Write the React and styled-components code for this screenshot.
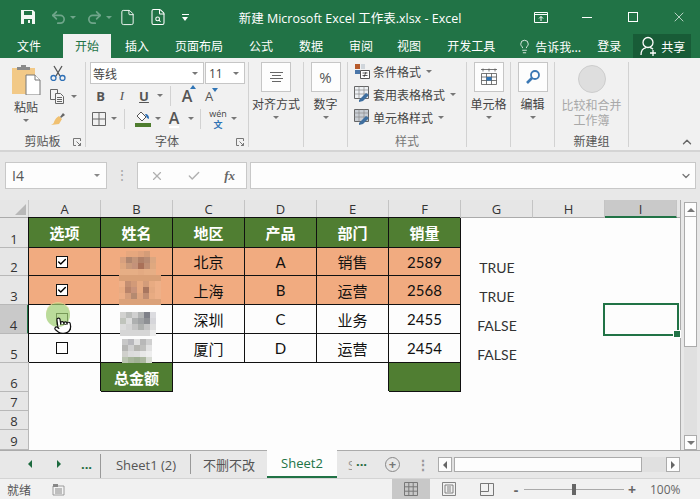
import styled, { createGlobalStyle } from "styled-components";
import { Check, ChevronDown, ChevronUp, File, FileSearch, Lightbulb, Pointer, Redo2, Undo2, X } from "lucide-react";

const CJK = `"Noto Sans CJK SC", sans-serif`;
const UI = `"Open Sans", "Noto Sans CJK SC", sans-serif`;
const SHEET = `Lato, "Noto Sans CJK SC", sans-serif`;
const GREEN = "#217346";

const tabs = ["开始", "插入", "页面布局", "公式", "数据", "审阅", "视图", "开发工具"];
const columns = ["A", "B", "C", "D", "E", "F", "G", "H", "I"];

const rows = [
	{ n: 1, cells: ["选项", "姓名", "地区", "产品", "部门", "销量"], kind: "head" },
	{ n: 2, check: true, cells: ["", "", "北京", "A", "销售", "2589"], kind: "hot", result: "TRUE" },
	{ n: 3, check: true, cells: ["", "", "上海", "B", "运营", "2568"], kind: "hot", result: "TRUE" },
	{ n: 4, check: false, cells: ["", "", "深圳", "C", "业务", "2455"], kind: "plain", result: "FALSE" },
	{ n: 5, check: false, cells: ["", "", "厦门", "D", "运营", "2454"], kind: "plain", result: "FALSE" },
];

const blurs = {
	2: {
		left: 19, top: 3, cols: 6,
		tiles: [
			"#f1ab80", "#e6a77e", "#e6a77e", "#dfa27c", "#d49c78", "#f1ab80",
			"#d7a07e", "#b0866f", "#c39478", "#b08068", "#b78a72", "#dba680",
			"#dfa77f", "#c9997a", "#c4927a", "#a97058", "#c08f74", "#dfa87f",
			"#e6ae85", "#e6ae85", "#e6ae85", "#e3aa82", "#e6ae85", "#e6ae85",
		],
	},
	3: {
		left: 18, top: -1, cols: 7,
		tiles: [
			"#d9a077", "#d9a077", "#d9a077", "#d9a077", "#d9a077", "#d9a077", "#d9a077",
			"#eeb088", "#c48f72", "#d29a78", "#e6a980", "#d39c7a", "#e8ab82", "#eeb088",
			"#e8ab82", "#b9846a", "#c8937a", "#e6a980", "#a8765f", "#e4a880", "#eeb088",
			"#ecae86", "#d59e7c", "#b58a70", "#dea47e", "#c08d72", "#e8ab82", "#eeb088",
			"#dba27a", "#dba27a", "#dba27a", "#dba27a", "#dba27a", "#dba27a", "#dba27a",
		],
	},
	4: {
		left: 19, top: 7, cols: 6,
		tiles: [
			"#d2d2d0", "#bcbebc", "#d0d0d0", "#b2b4b4", "#7e8088", "#dcdce0",
			"#c0c4bc", "#dcdcdc", "#aeb0b0", "#a0a2a4", "#8e9094", "#d6d6da",
			"#dcdcdc", "#d4d4d4", "#c4c4c4", "#aeb0ae", "#c4c4c4", "#dedede",
			"#d6d6d6", "#d6d6d6", "#d6d6d6", "#d6d6d6", "#d6d6d6", "#ececec",
		],
	},
	5: {
		left: 21, top: 5, cols: 5,
		tiles: [
			"#c8c8c8", "#b8b8bc", "#e0e0e0", "#b8b8b8", "#d0d0d0",
			"#b6b6b4", "#d0d0d0", "#b6b6b2", "#c0c0be", "#e2e2e2",
			"#d0d0cc", "#dcdcdc", "#dedede", "#e8e8e8", "#eeeeee",
			"#bac4b0", "#a8b69c", "#a0b094", "#acb8a0", "#d8dcd4",
		],
	},
};

const Caret = styled.i`
	display: inline-block;
	flex: none;
	width: 0;
	height: 0;
	margin-left: ${(p) => p.$ml ?? 0}px;
	border-left: 3px solid transparent;
	border-right: 3px solid transparent;
	border-top: 3px solid ${(p) => p.$color ?? "#777"};
`;

const SaveIcon = () => (
	<svg width="16" height="16" viewBox="0 0 16 16">
		<path d="M1 1h12l2 2v12H1z" fill="#f2f7f4" />
		<path d="M4 2h8v4H4zM4 10h8v5H4z" fill={GREEN} />
		<path d="M8 11h2v3H8z" fill="#f2f7f4" />
	</svg>
);

const RibbonDisplayIcon = () => (
	<svg width="14" height="11" viewBox="0 0 14 11" fill="none" stroke="#fff">
		<path d="M.5.5h13v10H.5zM.5 2.5h13M7 9V4.5M5 6.5l2-2 2 2" />
	</svg>
);

const ShareIcon = () => (
	<svg width="18" height="20" viewBox="0 0 18 20" fill="none" stroke="#fff" strokeWidth="1.3">
		<circle cx="8" cy="6.500" r="5" />
		<path d="M1 19c0-4.500 2.500-6.800 5.200-7.300M10 11.700c1.200.2 2.200.8 3 1.600M13 14v6M10 17h6" />
	</svg>
);

const PasteIcon = () => (
	<svg width="30" height="30" viewBox="0 0 30 30">
		<rect x="1" y="3" width="23" height="26" fill="#f2c987" />
		<path d="M6 5V2h4V0h5v2h4v3z" fill="#8a8a8a" />
		<path d="M15 10h9l5 5v15H15z" fill="#fff" stroke="#777" />
		<path d="M24 10v5h5" fill="#fff" stroke="#777" />
	</svg>
);

const ScissorsIcon = () => (
	<svg width="16" height="16" viewBox="0 0 16 16" fill="none">
		<path d="M4 1l6 10M12 1L6 11" stroke="#555" strokeWidth="1.300" />
		<circle cx="3.500" cy="13" r="2.500" stroke="#2d6fb5" strokeWidth="1.300" />
		<circle cx="12.500" cy="13" r="2.500" stroke="#2d6fb5" strokeWidth="1.300" />
	</svg>
);

const CopyIcon = () => (
	<svg width="15" height="15" viewBox="0 0 15 15" fill="#f4f4f4" stroke="#666">
		<path d="M.5.5h7v10h-7z" />
		<path d="M5.500 4.500h5l3 3v7h-8z" />
		<path d="M7 8.500h5M7 10.500h5M7 12.500h5" />
	</svg>
);

const BrushIcon = () => (
	<svg width="16" height="15" viewBox="0 0 16 15">
		<path d="M10 5l3-4 2 2-4 3z" fill="#666" />
		<path d="M9 4l3 3-3 5-8 1c2-1 3-2 3-3 1-3 3-5 5-6z" fill="#f0c070" />
	</svg>
);

const BordersIcon = () => (
	<svg width="14" height="14" viewBox="0 0 14 14" fill="none" stroke="#666">
		<path d="M.5.5h13v13H.5zM7 .5v13M.5 7h13" />
	</svg>
);

const FillIcon = () => (
	<svg width="17" height="16" viewBox="0 0 17 16">
		<path d="M7 1l5 5-4 4-5-5z" fill="#fff" stroke="#555" />
		<path d="M11 3c3 0 4 2 4 5l-2-1z" fill="#2d6fb5" />
		<path d="M1 12h16v4H1z" fill="#4e7c2e" />
	</svg>
);

const StyleIcon = ({ variant }) => (
	<svg width="16" height="16" viewBox="0 0 16 16">
		{variant === "cond" ? (
			<>
				<path d="M1 1h5v5H1z" fill="#b75b2c" />
				<path d="M1 7h5v4H1z" fill="#4a76a8" />
				<path d="M7 1h4v5H7z" fill="#cfd5db" />
				<path d="M6.500 7.500h9v8h-9z" fill="#fff" stroke="#555" />
				<path d="M8.500 10h5M8.500 12.500h5M12 9l-2 5" stroke="#333" strokeWidth=".8" />
			</>
		) : (
			<>
				<path d="M.5.500h14v12H.5z" fill={variant === "table" ? "#eef1f4" : "#c9ced4"} stroke="#666" />
				<path d="M.5 4h14M5 .5v12M10 .5v12M.5 8h14" stroke="#8a8a8a" strokeWidth=".7" />
				<path d="M5 14l7-7 3 2-6 6-4 1z" fill="#3f6f9f" />
			</>
		)}
	</svg>
);

const TableIcon = () => (
	<svg width="18" height="18" viewBox="0 0 18 18" fill="none" stroke="#555">
		<path d="M1.500 5.500h15v11h-15zM1.500 9h15M1.500 12.500h15M6.500 5.500v11M11.500 5.500v11" strokeWidth=".8" />
		<path d="M6.500 9h5v3.500h-5z" fill="#2f74b5" stroke="none" />
		<path d="M1 1.500h16M3 .5v3M9 .5v3M15 .5v3" strokeWidth=".8" />
	</svg>
);

const SearchIcon = () => (
	<svg width="16" height="16" viewBox="0 0 16 16" fill="none">
		<circle cx="10" cy="6" r="4" stroke="#3b78b4" strokeWidth="1.800" />
		<path d="M7 9l-5 5" stroke="#3b78b4" strokeWidth="2.600" />
	</svg>
);

const Launcher = () => (
	<svg width="8" height="8" viewBox="0 0 8 8" fill="none" stroke="#777">
		<path d="M7.500 3V.5H.5v7H3M3.500 3.500l4 4M7.500 5v2.500H5" />
	</svg>
);

const GridViewIcon = () => (
	<svg width="14" height="14" viewBox="0 0 14 14" fill="none" stroke="#777">
		<path d="M.5.500h13v13H.5zM4.800.5v13M9.200.5v13M.5 4.800h13M.5 9.200h13" />
	</svg>
);

const PageViewIcon = () => (
	<svg width="14" height="14" viewBox="0 0 14 14" fill="none" stroke="#777">
		<path d="M.5.500h13v13H.5zM3 3h8v8H3zM5 5h4M5 7h4M5 9h4" strokeWidth=".9" />
	</svg>
);

const BreakViewIcon = () => (
	<svg width="14" height="13" viewBox="0 0 14 13" fill="none" stroke="#777">
		<path d="M.5.500h13v12H.5zM.5 8.500h8v-8" />
	</svg>
);

const MacroIcon = () => (
	<svg width="13" height="13" viewBox="0 0 13 13">
		<path d="M1 3h11v9H1z" fill="#f4f4f4" stroke="#888" strokeWidth=".8" />
		<path d="M1 1h5v3H1z" fill="#888" />
		<path d="M3 6h7M3 8h7M3 10h7" stroke="#888" />
	</svg>
);

const App = () => (
	<Page>
		<GlobalStyle />
		<TitleBar>
			<QuickAccess>
				<QatSlot $ml={20}><SaveIcon /></QatSlot>
				<QatSlot $ml={14}><Undo2 size={17} color="#6fa58a" strokeWidth={2.4} /></QatSlot>
				<QatSlot $ml={3}><Caret $color="#6fa58a" /></QatSlot>
				<QatSlot $ml={10}><Redo2 size={17} color="#6fa58a" strokeWidth={2.4} /></QatSlot>
				<QatSlot $ml={3}><Caret $color="#6fa58a" /></QatSlot>
				<QatSlot $ml={7}><File size={17} color="#fff" strokeWidth={1.3} /></QatSlot>
				<QatSlot $ml={13}><FileSearch size={18} color="#fff" strokeWidth={1.4} /></QatSlot>
				<QatSlot $ml={15}><Customize /></QatSlot>
			</QuickAccess>
			<Title>新建 Microsoft Excel 工作表.xlsx - Excel</Title>
			<WindowControls>
				<WindowButton><RibbonDisplayIcon /></WindowButton>
				<WindowButton><MinLine /></WindowButton>
				<WindowButton><MaxBox /></WindowButton>
				<WindowButton><X size={16} color="#fff" strokeWidth={1} /></WindowButton>
			</WindowControls>
		</TitleBar>

		<TabRow>
			<MenuTab $file>文件</MenuTab>
			{tabs.map((t) => (
				<MenuTab key={t} $active={t === "开始"} $tight={t === "视图"}>
					{t}
				</MenuTab>
			))}
			<TellMe>
				<Lightbulb size={15} color="#fff" strokeWidth={1.3} />
				告诉我...
			</TellMe>
			<Login>登录</Login>
			<Share>
				<ShareIcon />
				共享
			</Share>
		</TabRow>

		<Ribbon>
			<Group $w={86}>
				<GroupBody>
					<BigColumn $paste>
						<PasteIcon />
						<BigLabel>粘贴</BigLabel>
						<Caret />
					</BigColumn>
					<SmallColumn>
						<ScissorsIcon />
						<SmallRow><CopyIcon /><Caret $ml={6} /></SmallRow>
						<BrushIcon />
					</SmallColumn>
				</GroupBody>
				<GroupLabel>剪贴板<LauncherSlot><Launcher /></LauncherSlot></GroupLabel>
			</Group>

			<Group $w={163}>
				<FontBody>
					<InputRow>
						<FontInput>等线<Caret /></FontInput>
						<SizeInput>11<Caret /></SizeInput>
					</InputRow>
					<ToolRow>
						<Tool $w={21}><b>B</b></Tool>
						<Tool $w={22} $serif><i>I</i></Tool>
						<Tool $w={22}><Underlined>U</Underlined></Tool>
						<Tool $w={10}><Caret /></Tool>
						<ToolDivider />
						<Tool $w={22} $big>A<UpMark /></Tool>
						<Tool $w={22}>A<DownMark /></Tool>
					</ToolRow>
					<ToolRow>
						<Tool $w={18}><BordersIcon /></Tool>
						<Tool $w={11}><Caret /></Tool>
						<ToolDivider />
						<Tool $w={24}><FillIcon /></Tool>
						<Tool $w={8}><Caret /></Tool>
						<Tool $w={24} $big><UnderWhite>A</UnderWhite></Tool>
						<Tool $w={9}><Caret /></Tool>
						<ToolDivider />
						<Tool $w={24}><Phonetic>wén<em>文</em></Phonetic></Tool>
						<Tool $w={8}><Caret /></Tool>
					</ToolRow>
				</FontBody>
				<GroupLabel>字体<LauncherSlot><Launcher /></LauncherSlot></GroupLabel>
			</Group>

			<Group $w={55}>
				<BigColumn>
					<BoxButton><AlignLines><i /><i /><i /><i /></AlignLines></BoxButton>
					<BigLabel>对齐方式</BigLabel>
					<Caret />
				</BigColumn>
			</Group>

			<Group $w={44}>
				<BigColumn>
					<BoxButton>%</BoxButton>
					<BigLabel>数字</BigLabel>
					<Caret />
				</BigColumn>
			</Group>

			<Group $w={119}>
				<GroupBody>
					<StyleList>
						<StyleRow><StyleIcon variant="cond" />条件格式<Caret $ml={2} /></StyleRow>
						<StyleRow><StyleIcon variant="table" />套用表格格式<Caret $ml={2} /></StyleRow>
						<StyleRow><StyleIcon variant="cell" />单元格样式<Caret $ml={2} /></StyleRow>
					</StyleList>
				</GroupBody>
				<GroupLabel $muted>样式</GroupLabel>
			</Group>

			<Group $w={44}>
				<BigColumn>
					<BoxButton><TableIcon /></BoxButton>
					<BigLabel>单元格</BigLabel>
					<Caret />
				</BigColumn>
			</Group>

			<Group $w={44}>
				<BigColumn>
					<BoxButton><SearchIcon /></BoxButton>
					<BigLabel>编辑</BigLabel>
					<Caret />
				</BigColumn>
			</Group>

			<Group $w={74}>
				<GroupBody>
					<BigColumn>
						<MergeCircle />
						<DisabledLabel>比较和合并<br />工作簿</DisabledLabel>
					</BigColumn>
				</GroupBody>
				<GroupLabel>新建组</GroupLabel>
			</Group>

			<Collapse><ChevronUp size={14} color="#666" strokeWidth={2.4} /></Collapse>
		</Ribbon>

		<FormulaBar>
			<NameBox>I4<Caret $color="#888" /></NameBox>
			<Dots>⋮</Dots>
			<FxBox>
				<X size={14} color="#b0b0b0" strokeWidth={2} />
				<Check size={14} color="#b0b0b0" strokeWidth={2.4} />
				<Fx>fx</Fx>
			</FxBox>
			<FormulaInput><ChevronDown size={12} color="#777" strokeWidth={2.6} /></FormulaInput>
		</FormulaBar>

		<SheetArea>
			<Grid>
				<Corner><CornerMark /></Corner>
				{columns.map((c) => (
					<ColHead key={c} $selected={c === "I"}>{c}</ColHead>
				))}
				<ColHead $filler />

				{rows.map((row) => (
					<Row key={row.n} row={row} />
				))}

				<RowHead>6</RowHead>
				<Empty />
				<Cell $kind="head">总金额</Cell>
				<Empty />
				<Empty />
				<Empty />
				<Cell $kind="head" />
				<Empty />
				<Empty />
				<Empty />
				<Empty />

				{[7, 8, 9].map((n) => (
					<BlankRow key={n} n={n} />
				))}
			</Grid>
			<VScroll>
				<ScrollButton><ArrowUp /></ScrollButton>
				<VThumb />
				<VTrack />
				<ScrollButton><ArrowDown /></ScrollButton>
			</VScroll>
		</SheetArea>

		<SheetTabs>
			<NavSlot><NavLeft /></NavSlot>
			<NavSlot><NavRight /></NavSlot>
			<NavSlot $last>...</NavSlot>
			<SheetTab $w={90} $divider>Sheet1 (2)</SheetTab>
			<SheetTab $w={76}>不删不改</SheetTab>
			<SheetTab $w={70} $active>Sheet2</SheetTab>
			<SheetTab $w={15} $clipped>S</SheetTab>
			<NavSlot $w={19}>...</NavSlot>
			<AddSheet>+</AddSheet>
			<TabDots>⋮</TabDots>
			<HScroll>
				<HButton><NavLeftGray /></HButton>
				<HThumb />
				<HButton><NavRightGray /></HButton>
			</HScroll>
		</SheetTabs>

		<StatusBar>
			<Ready>就绪</Ready>
			<MacroIcon />
			<StatusRight>
				<ViewButton $active><GridViewIcon /></ViewButton>
				<ViewButton><PageViewIcon /></ViewButton>
				<ViewButton><BreakViewIcon /></ViewButton>
				<ZoomSign $ml={4}>-</ZoomSign>
				<Slider><SliderThumb /></Slider>
				<ZoomSign>+</ZoomSign>
				<ZoomValue>100%</ZoomValue>
			</StatusRight>
		</StatusBar>
	</Page>
);

export default App;

const Row = ({ row }) => (
	<>
		<RowHead $selected={row.n === 4}>{row.n}</RowHead>
		{row.cells.map((text, i) => (
			<Cell key={i} $kind={row.kind}>
				{text}
				{row.kind !== "head" && i === 0 && <CheckBox>{row.check && <Check size={10} color="#000" strokeWidth={3.4} />}</CheckBox>}
				{row.n === 4 && i === 0 && (
					<>
						<ClickRing />
						<Hand><Pointer size={19} color="#111" fill="#fff" strokeWidth={1.5} /></Hand>
					</>
				)}
				{row.kind !== "head" && i === 1 && <Blur blur={blurs[row.n]} />}
			</Cell>
		))}
		<Result>{row.result}</Result>
		<Empty />
		<Empty $selected={row.n === 4} />
		<Empty />
	</>
);

const BlankRow = ({ n }) => (
	<>
		<RowHead>{n}</RowHead>
		{[...columns, "J"].map((c) => (
			<Empty key={c} />
		))}
	</>
);

const Blur = ({ blur }) => (
	<Mosaic $left={blur.left} $top={blur.top} $cols={blur.cols}>
		{blur.tiles.map((c, i) => (
			<i key={i} style={{ background: c }} />
		))}
	</Mosaic>
);

const GlobalStyle = createGlobalStyle`
	html, body {
		margin: 0;
		background: #fff;
	}
	* {
		box-sizing: border-box;
	}
`;

const Page = styled.div`
	width: 700px;
	height: 499px;
	overflow: hidden;
	display: flex;
	flex-direction: column;
	background: #f1f1f1;
	font-family: ${CJK};
	color: #444;
`;

const TitleBar = styled.div`
	height: 34px;
	flex: none;
	display: grid;
	grid-template-columns: 200px 300px 1fr;
	align-items: center;
	background: ${GREEN};
`;

const QuickAccess = styled.div`
	display: flex;
	align-items: center;
`;

const QatSlot = styled.span`
	display: flex;
	margin-left: ${(p) => p.$ml}px;
`;

const Customize = styled.span`
	display: block;
	width: 7px;
	height: 6px;
	border-top: 1px solid #fff;
	position: relative;

	&::after {
		content: "";
		position: absolute;
		left: 0;
		top: 2px;
		border-left: 3.5px solid transparent;
		border-right: 3.5px solid transparent;
		border-top: 4px solid #fff;
	}
`;

const Title = styled.div`
	font: 12.5px ${UI};
	color: #fff;
	text-align: center;
	white-space: nowrap;
`;

const WindowControls = styled.div`
	display: flex;
	justify-content: flex-end;
	margin-right: -2px;
`;

const WindowButton = styled.span`
	width: 46px;
	height: 28px;
	display: flex;
	align-items: center;
	justify-content: center;
`;

const MinLine = styled.i`
	width: 10px;
	height: 1px;
	background: #fff;
`;

const MaxBox = styled.i`
	width: 10px;
	height: 10px;
	border: 1px solid #fff;
`;

const TabRow = styled.div`
	height: 24px;
	flex: none;
	display: flex;
	gap: 2px;
	padding-left: 5px;
	background: ${GREEN};
`;

const MenuTab = styled.div`
	padding: 0 12px;
	height: 24px;
	margin-right: ${(p) => (p.$file ? 8 : 0)}px;
	margin-left: ${(p) => (p.$tight ? -2 : 0)}px;
	font-size: 12px;
	line-height: 23px;
	color: ${(p) => (p.$active ? GREEN : "#fff")};
	background: ${(p) => (p.$active ? "#f1f1f1" : "transparent")};
`;

const TellMe = styled.div`
	display: flex;
	align-items: center;
	gap: 3px;
	margin-left: 8px;
	width: 78px;
	font-size: 12px;
	color: #fff;
	white-space: nowrap;
`;

const Login = styled.div`
	width: 34px;
	font-size: 12px;
	line-height: 23px;
	color: #fff;
`;

const Share = styled.div`
	display: flex;
	align-items: center;
	gap: 3px;
	width: 58px;
	padding-left: 7px;
	font-size: 12px;
	color: #fff;
	background: #185c37;
`;

const Ribbon = styled.div`
	height: 94px;
	flex: none;
	position: relative;
	display: flex;
	align-items: flex-start;
	padding-top: 4px;
	border-bottom: 2px solid #d4d4d4;
	background: #f1f1f1;
`;

const Group = styled.div`
	width: ${(p) => p.$w}px;
	height: 85px;
	flex: none;
	display: flex;
	flex-direction: column;
	border-right: 1px solid #d2d2d2;
`;

const GroupBody = styled.div`
	flex: 1;
	min-height: 0;
	display: flex;
`;

const GroupLabel = styled.div`
	position: relative;
	height: 18px;
	flex: none;
	font-size: 12px;
	line-height: 24px;
	text-align: center;
	color: ${(p) => (p.$muted ? "#777" : "#555")};
`;

const LauncherSlot = styled.span`
	position: absolute;
	right: 4px;
	top: 9px;
	display: flex;
`;

const BigColumn = styled.div`
	flex: ${(p) => (p.$paste ? "none" : 1)};
	width: ${(p) => (p.$paste ? "50px" : "auto")};
	padding: ${(p) => (p.$paste ? "3px 0 0 2px" : 0)};
	display: flex;
	flex-direction: column;
	align-items: center;
`;

const BigLabel = styled.div`
	margin: 5px 0 5px;
	font-size: 12px;
	line-height: 14px;
	white-space: nowrap;
	color: #444;
`;

const SmallColumn = styled.div`
	width: 34px;
	display: flex;
	flex-direction: column;
	align-items: flex-start;
	gap: 8px;
	padding-top: 3px;
`;

const SmallRow = styled.div`
	display: flex;
	align-items: center;
`;

const FontBody = styled.div`
	flex: 1;
	min-height: 0;
	padding-left: 4px;
`;

const InputRow = styled.div`
	display: flex;
	gap: 1px;
`;

const FontInput = styled.div`
	width: 114px;
	height: 22px;
	display: flex;
	align-items: center;
	justify-content: space-between;
	padding: 0 5px 0 2px;
	border: 1px solid #c6c6c6;
	background: #fff;
	font-size: 12px;
`;

const SizeInput = styled(FontInput)`
	width: 40px;
	padding-left: 3px;
	font: 12px ${UI};
`;

const ToolRow = styled.div`
	height: 23px;
	display: flex;
	align-items: center;
`;

const Tool = styled.span`
	position: relative;
	flex: none;
	width: ${(p) => p.$w}px;
	display: flex;
	align-items: center;
	justify-content: center;
	font: ${(p) => (p.$big ? 16 : 13)}px ${(p) => (p.$serif ? '"Liberation Serif", serif' : UI)};
	font-weight: ${(p) => (p.$big ? 600 : 400)};
	color: #555;
`;

const Underlined = styled.span`
	font-weight: 700;
	text-decoration: underline;
`;

const UnderWhite = styled.span`
	line-height: 16px;
	border-bottom: 2px solid #fff;
`;

const UpMark = styled.i`
	position: absolute;
	right: 2px;
	top: 0;
	border-left: 3px solid transparent;
	border-right: 3px solid transparent;
	border-bottom: 4px solid #2f74b5;
`;

const DownMark = styled.i`
	position: absolute;
	right: 2px;
	top: 1px;
	border-left: 3px solid transparent;
	border-right: 3px solid transparent;
	border-top: 4px solid #2f74b5;
`;

const ToolDivider = styled.i`
	width: 1px;
	height: 20px;
	margin: 0 5px;
	background: #d2d2d2;
`;

const Phonetic = styled.span`
	display: flex;
	flex-direction: column;
	align-items: center;
	font: 9px/11px ${UI};
	color: #444;

	em {
		font: 700 9px/11px ${CJK};
		color: #2f74b5;
	}
`;

const BoxButton = styled.div`
	width: 30px;
	height: 30px;
	flex: none;
	display: flex;
	align-items: center;
	justify-content: center;
	border: 1px solid #c6c6c6;
	background: #fdfdfd;
	font: 15px ${UI};
	color: #555;
`;

const AlignLines = styled.span`
	display: flex;
	flex-direction: column;
	align-items: center;
	gap: 2px;

	i {
		display: block;
		width: 13px;
		height: 1px;
		background: #666;
	}
	i:nth-child(even) {
		width: 9px;
	}
`;

const StyleList = styled.div`
	display: flex;
	flex-direction: column;
	gap: 5px;
	padding-left: 6px;
`;

const StyleRow = styled.div`
	display: flex;
	align-items: center;
	gap: 3px;
	height: 18px;
	font-size: 12px;
	white-space: nowrap;
`;

const MergeCircle = styled.div`
	width: 28px;
	height: 28px;
	flex: none;
	margin-top: 3px;
	border-radius: 50%;
	border: 1px solid #cdcdcd;
	background: #dedede;
`;

const DisabledLabel = styled.div`
	margin-top: 4px;
	font-size: 12px;
	line-height: 15px;
	text-align: center;
	white-space: nowrap;
	color: #a8a8a8;
`;

const Collapse = styled.span`
	position: absolute;
	right: 6px;
	bottom: 1px;
	display: flex;
`;

const FormulaBar = styled.div`
	height: 48px;
	flex: none;
	display: flex;
	align-items: flex-start;
	padding: 10px 4px 0 5px;
	background: #e8e8e8;
`;

const NameBox = styled.div`
	width: 102px;
	height: 27px;
	display: flex;
	align-items: center;
	justify-content: space-between;
	padding: 0 6px;
	border: 1px solid #c8c8c8;
	background: #fdfdfd;
	font: 14px ${UI};
	color: #555;
`;

const Dots = styled.div`
	width: 30px;
	height: 27px;
	text-align: center;
	font: 14px/26px ${UI};
	color: #aaa;
`;

const FxBox = styled.div`
	width: 110px;
	height: 27px;
	flex: none;
	display: flex;
	align-items: center;
	justify-content: space-between;
	padding: 0 11px 0 12px;
	border: 1px solid #c8c8c8;
	background: #fdfdfd;
`;

const Fx = styled.span`
	font: italic 700 13px "Liberation Serif", serif;
	color: #666;
`;

const FormulaInput = styled.div`
	flex: 1;
	height: 27px;
	margin-left: 3px;
	display: flex;
	align-items: center;
	justify-content: flex-end;
	padding-right: 3px;
	border: 1px solid #c8c8c8;
	background: #fdfdfd;
`;

const SheetArea = styled.div`
	height: 250px;
	flex: none;
	display: flex;
	background: #e8e8e8;
`;

const Grid = styled.div`
	width: 681px;
	flex: none;
	display: grid;
	grid-template-columns: 29px repeat(9, 72px) 1fr;
	grid-template-rows: 18px 30px 28px 29px 29px 29px 29px 19px 19px 20px;
	border-right: 1px solid #ababab;
	background: #fdfdfd;
	font-family: ${SHEET};
`;

const Corner = styled.div`
	display: flex;
	align-items: flex-end;
	justify-content: flex-end;
	padding: 0 2px 2px 0;
	background: #e6e6e6;
	border-right: 1px solid #c4c4c4;
	border-bottom: 1px solid #ababab;
`;

const CornerMark = styled.i`
	width: 11px;
	height: 11px;
	background: #b8b8b8;
	clip-path: polygon(100% 0, 100% 100%, 0 100%);
`;

const ColHead = styled.div`
	display: flex;
	align-items: center;
	justify-content: center;
	padding-top: 1px;
	font: 13px ${UI};
	color: #333;
	background: ${(p) => (p.$selected ? "#c9c9c9" : "#e6e6e6")};
	border-right: ${(p) => (p.$filler ? "none" : "1px solid #c4c4c4")};
	border-bottom: ${(p) => (p.$selected ? `2px solid ${GREEN}` : "1px solid #ababab")};
`;

const RowHead = styled.div`
	display: flex;
	align-items: flex-end;
	justify-content: center;
	font: 13px/16px ${UI};
	color: #333;
	background: ${(p) => (p.$selected ? "#c9c9c9" : "#e6e6e6")};
	border-right: ${(p) => (p.$selected ? `2px solid ${GREEN}` : "1px solid #b8b8b8")};
	border-bottom: 1px solid #b8b8b8;
`;

const kinds = {
	head: { bg: "#507e32", color: "#fff", weight: 700, size: 15 },
	hot: { bg: "#f1ab80", color: "#111", weight: 400, size: 15 },
	plain: { bg: "#fdfdfd", color: "#111", weight: 400, size: 15 },
};

const Cell = styled.div`
	position: relative;
	display: flex;
	align-items: center;
	justify-content: center;
	border-right: 1px solid #111;
	border-bottom: 1px solid #111;
	box-shadow: -1px -1px 0 #111;
	background: ${(p) => kinds[p.$kind].bg};
	color: ${(p) => kinds[p.$kind].color};
	font-size: ${(p) => kinds[p.$kind].size}px;
	font-weight: ${(p) => kinds[p.$kind].weight};
`;

const Empty = styled.div`
	position: relative;
	${(p) =>
		p.$selected &&
		`
		z-index: 1;
		outline: 2px solid ${GREEN};

		&::after {
			content: "";
			position: absolute;
			right: -4px;
			bottom: -4px;
			width: 6px;
			height: 6px;
			background: ${GREEN};
			border: 1px solid #fff;
		}
	`}
`;

const Result = styled.div`
	display: flex;
	align-items: flex-end;
	justify-content: center;
	font-size: 14px;
	line-height: 16px;
	color: #333;
`;

const CheckBox = styled.span`
	width: 12px;
	height: 12px;
	margin-right: 6px;
	display: flex;
	align-items: center;
	justify-content: center;
	border: 1px solid #111;
	background: #fff;
`;

const ClickRing = styled.i`
	position: absolute;
	left: 17px;
	top: -2px;
	width: 24px;
	height: 24px;
	border-radius: 50%;
	background: rgba(160, 205, 115, 0.72);
	box-shadow: 0 -1px 0 #e4d090;
`;

const Hand = styled.span`
	position: absolute;
	left: 24px;
	top: 11px;
	display: flex;
	transform: rotate(-8deg);
`;

const Mosaic = styled.div`
	position: absolute;
	z-index: 1;
	left: ${(p) => p.$left}px;
	top: ${(p) => p.$top}px;
	display: grid;
	grid-template-columns: repeat(${(p) => p.$cols}, 6px);
	grid-auto-rows: 6px;

	i {
		display: block;
	}
`;

const VScroll = styled.div`
	width: 13px;
	margin: 2px 0 0 3px;
	display: flex;
	flex-direction: column;
`;

const ScrollButton = styled.div`
	height: 15px;
	flex: none;
	display: flex;
	align-items: center;
	justify-content: center;
	border: 1px solid #ababab;
	background: #fdfdfd;
`;

const ArrowUp = styled.i`
	border-left: 4px solid transparent;
	border-right: 4px solid transparent;
	border-bottom: 4px solid #777;
`;

const ArrowDown = styled.i`
	border-left: 4px solid transparent;
	border-right: 4px solid transparent;
	border-top: 4px solid #777;
`;

const VThumb = styled.div`
	height: 130px;
	flex: none;
	border: 1px solid #ababab;
	border-top: none;
	background: #fdfdfd;
`;

const VTrack = styled.div`
	flex: 1;
	background: #e0e0e0;
`;

const SheetTabs = styled.div`
	height: 28px;
	flex: none;
	display: flex;
	align-items: stretch;
	padding-left: 15px;
	border-top: 1px solid #ababab;
	background: #e8e8e8;
`;

const NavSlot = styled.div`
	width: ${(p) => p.$w ?? 29}px;
	flex: none;
	margin: 3px 0;
	display: flex;
	align-items: center;
	justify-content: center;
	padding-bottom: ${(p) => (p.$w || p.$last ? 6 : 0)}px;
	font: 700 13px ${UI};
	color: #1c6a3e;
	height: 20px;
	align-self: flex-start;
	${(p) => p.$last && "border-right: 1px solid #999; width: 27px; height: 20px; box-sizing: content-box;"}
`;

const NavLeft = styled.i`
	border-top: 4px solid transparent;
	border-bottom: 4px solid transparent;
	border-right: 4px solid #1c6a3e;
`;

const NavRight = styled.i`
	border-top: 4px solid transparent;
	border-bottom: 4px solid transparent;
	border-left: 4px solid #1c6a3e;
`;

const NavLeftGray = styled(NavLeft)`
	border-right-color: #666;
`;

const NavRightGray = styled(NavRight)`
	border-left-color: #666;
`;

const SheetTab = styled.div`
	position: relative;
	width: ${(p) => p.$w}px;
	flex: none;
	overflow: hidden;
	display: flex;
	align-items: center;
	justify-content: ${(p) => (p.$clipped ? "flex-start" : "center")};
	padding-left: ${(p) => (p.$clipped ? 11 : 0)}px;
	font: 13px ${UI};
	white-space: nowrap;
	color: ${(p) => (p.$active ? "#217346" : p.$clipped ? "#999" : "#555")};
	background: ${(p) => (p.$active ? "#fdfdfd" : "transparent")};
	border-bottom: ${(p) => (p.$active ? `2px solid ${GREEN}` : "none")};
	${(p) => p.$active && "margin-top: -1px;"}
	${(p) =>
		p.$divider &&
		`
		&::after {
			content: "";
			position: absolute;
			right: 0;
			top: 3px;
			width: 1px;
			height: 20px;
			background: #999;
		}
	`}
`;

const AddSheet = styled.div`
	width: 15px;
	height: 15px;
	margin: 6px 0 0 14px;
	flex: none;
	border: 1.500px solid #888;
	border-radius: 50%;
	display: flex;
	align-items: center;
	justify-content: center;
	font: 700 13px/13px ${UI};
	color: #777;
`;

const TabDots = styled.div`
	width: 15px;
	margin-left: 15px;
	flex: none;
	text-align: center;
	font: 700 14px/27px ${UI};
	color: #999;
`;

const HScroll = styled.div`
	width: 242px;
	height: 15px;
	margin: 6px 0 0 8px;
	flex: none;
	display: flex;
	justify-content: space-between;
	background: #e0e0e0;
`;

const HButton = styled.div`
	width: 14px;
	display: flex;
	align-items: center;
	justify-content: center;
	border: 1px solid #ababab;
	background: #fdfdfd;
`;

const HThumb = styled.div`
	width: 188px;
	margin: 0 24px 0 1px;
	border: 1px solid #ababab;
	background: #fdfdfd;
`;

const StatusBar = styled.div`
	flex: 1;
	display: flex;
	align-items: center;
	padding-left: 7px;
	border-top: 1px solid #d4d4d4;
	background: #f1f1f1;
`;

const Ready = styled.span`
	width: 45px;
	font-size: 12px;
	color: #555;
`;

const StatusRight = styled.div`
	margin-left: auto;
	height: 100%;
	display: flex;
	align-items: center;
	padding-right: 18px;
`;

const ViewButton = styled.span`
	width: 38px;
	height: 100%;
	display: flex;
	align-items: center;
	justify-content: center;
	background: ${(p) => (p.$active ? "#c8c8c8" : "transparent")};
`;

const ZoomSign = styled.span`
	width: 12px;
	margin-left: ${(p) => p.$ml ?? 0}px;
	text-align: center;
	font: 700 14px ${UI};
	color: #666;
`;

const Slider = styled.div`
	width: 100px;
	height: 1px;
	margin: 0 2px;
	position: relative;
	background: #aaa;
`;

const SliderThumb = styled.i`
	position: absolute;
	left: 48px;
	top: -5px;
	width: 4px;
	height: 11px;
	background: #666;
`;

const ZoomValue = styled.span`
	width: 32px;
	margin-left: 12px;
	font: 12px ${UI};
	color: #666;
`;
